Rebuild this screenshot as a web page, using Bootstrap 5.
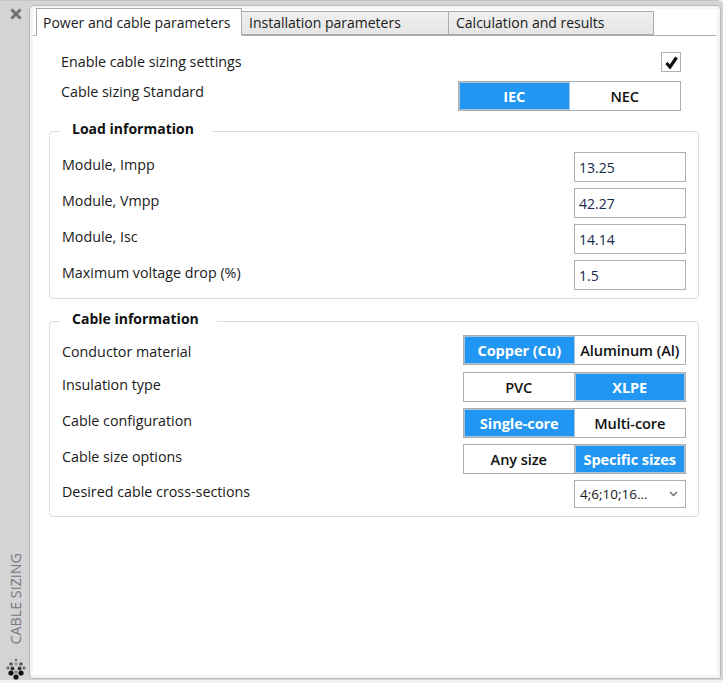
<!DOCTYPE html>
<html lang="en">
<head>
  <meta charset="UTF-8">
  <meta name="viewport" content="width=device-width, initial-scale=1.0">
  <title>Cable sizing</title>
  <link href="https://cdn.jsdelivr.net/npm/bootstrap@5.3.0/dist/css/bootstrap.min.css" rel="stylesheet">
  <style>
    html, body { height: 100%; }
    body { background: #f0f0f0; font-family: "Open Sans", "Noto Sans", sans-serif; font-size: 14.3px; color: #1a1a1a; overflow: hidden; }
    .palette { height: 680px; width: 723px; background: #d4d4d4; padding: 4px 2px 1px 0; border-top: 1px solid #c4c4c4; border-top-right-radius: 6px; }
    .side-strip { width: 29px; flex: none; }
    .close-x { width: 12px; height: 12px; margin-top: 3px; margin-left: 2px; display: block; }
    .side-title { writing-mode: vertical-rl; transform: rotate(180deg); font-size: 14.3px; color: #77777f; line-height: 1; margin-bottom: 13px; margin-left: 3px; }
    .side-logo { width: 22px; height: 22px; margin-bottom: -1px; margin-left: 3px; display: block; }
    .main-pane { background: #fff; border: 1px solid #b9b9b9; border-radius: 4px 4px 3px 4px; box-shadow: inset 0 0 0 3px #f4f4f4; padding: 2px 4px 0 3px; min-width: 0; }
    .tab-row { height: 28px; padding-left: 3px; border-bottom: 1px solid #a9a9a9; }
    .tab-item { width: 206px; height: 24px; margin-top: 3px; border: 1px solid #acacac; border-left-width: 0; background: linear-gradient(#f0f0f0, #e5e5e5); font-size: 14px; line-height: 22px; padding-left: 7px; color: #1a1a1a; white-space: nowrap; }
    .tab-item.is-active { height: 28px; margin-top: 0; background: #fff; border-left-width: 1px; border-bottom-color: #fff; padding-left: 6px; line-height: 27px; margin-bottom: -1px; }
    .tab-item:nth-child(2) { width: 207px; }
    .tab-item:nth-child(3) { width: 205px; }
    .tab-body { padding: 0 17px 0 16px; }
    .top-row { height: 30px; padding: 0 18px 0 12px; }
    .enable-row { margin-top: 11px; margin-bottom: 4px; }
    .tick-box { width: 20px; height: 20px; border: 1px solid #b0b0b0; background: #fff; }
    .seg-wrap { display: flex; border: 1px solid #adadad; height: 30px; width: 223px; flex: none; }
    .seg-btn { flex: 1 1 50%; text-align: center; font-size: 14.6px; font-weight: 600; line-height: 28px; color: #111; background: #fff; white-space: nowrap; letter-spacing: -0.1px; }
    .seg-btn:first-child { border-right: 1px solid #adadad; }
    .seg-btn.is-on { background: #2196f3; color: #fff; font-weight: 700; border: 1px solid #a9c3d8; line-height: 26px; }
    .group-box { border: 1px solid #d8dde2; border-radius: 4px; padding: 0 12px; margin: 0; min-width: 0; }
    .group-box legend { float: none; width: auto; margin: 0 0 0 -2px; padding: 1px 18px 5px 12px; font-size: 14px; font-weight: 700; line-height: 20px; color: #111; }
    .load-box { margin-top: 7px; height: 181px; }
    .cable-box { margin-top: 9px; height: 209px; }
    .load-rows { margin-top: 8px; }
    .cable-rows { margin-top: 1px; }
    .field-row { height: 30px; margin-bottom: 6px; }
    .cable-rows .field-row:first-child { margin-bottom: 7px; }
    .field-label { margin-top: -4px; }
    .field-label-low { margin-top: 4px; }
    .num-box { width: 112px; height: 30px; border: 1px solid #b0b0b0; padding: 1px 5px 0 4px; line-height: 28px; color: #14284a; font-size: 14px; background: #fff; }
    .select-box { width: 112px; height: 28px; border: 1px solid #b0b0b0; padding: 0 7px 0 5px; background: #fff; color: #1a1a1a; font-size: 13.5px; }
  </style>
</head>
<body>
  <div class="palette d-flex">
    <div class="side-strip d-flex flex-column align-items-center justify-content-between">
      <svg class="close-x" viewBox="0 0 12 12"><path d="M1.5 1.5 L10.5 10.5 M10.5 1.5 L1.5 10.5" fill="none" stroke="#707070" stroke-width="3"/></svg>
      <div class="d-flex flex-column align-items-center">
        <div class="side-title">CABLE SIZING</div>
        <svg class="side-logo" viewBox="5 658 22 22">
          <circle cx="16" cy="660" r="1.2" fill="#666"/>
          <circle cx="11" cy="664" r="1.8" fill="#555"/><circle cx="16" cy="664" r="1.8" fill="#999"/><circle cx="21" cy="664" r="1.8" fill="#555"/>
          <circle cx="8" cy="668" r="1.7" fill="#777"/><circle cx="12.5" cy="668.5" r="2" fill="#333"/><circle cx="19.5" cy="668.5" r="2" fill="#333"/><circle cx="24" cy="668" r="1.7" fill="#777"/>
          <circle cx="16" cy="672" r="1.8" fill="#888"/>
          <circle cx="11" cy="673" r="2.6" fill="#111"/><circle cx="21" cy="673" r="2.6" fill="#111"/>
          <circle cx="16" cy="677" r="2.6" fill="#111"/>
        </svg>
      </div>
    </div>

    <div class="main-pane flex-grow-1 d-flex flex-column">
      <div class="tab-row d-flex">
        <div class="tab-item is-active">Power and cable parameters</div>
        <div class="tab-item">Installation parameters</div>
        <div class="tab-item">Calculation and results</div>
      </div>

      <div class="tab-body">
        <div class="d-flex justify-content-between align-items-center top-row enable-row">
          <span>Enable cable sizing settings</span>
          <span class="tick-box d-flex align-items-center justify-content-center">
            <svg width="13" height="13" viewBox="0 0 13 13"><path d="M1.5 7 L5 11 L11.5 1.5" fill="none" stroke="#111" stroke-width="3.2"/></svg>
          </span>
        </div>
        <div class="d-flex justify-content-between top-row">
          <span>Cable sizing Standard</span>
          <div class="seg-wrap">
            <div class="seg-btn is-on">IEC</div>
            <div class="seg-btn">NEC</div>
          </div>
        </div>

        <fieldset class="group-box load-box">
          <legend>Load information</legend>
          <div class="load-rows">
            <div class="field-row d-flex justify-content-between align-items-center">
              <span class="field-label">Module, Impp</span><div class="num-box">13.25</div>
            </div>
            <div class="field-row d-flex justify-content-between align-items-center">
              <span class="field-label">Module, Vmpp</span><div class="num-box">42.27</div>
            </div>
            <div class="field-row d-flex justify-content-between align-items-center">
              <span class="field-label">Module, Isc</span><div class="num-box">14.14</div>
            </div>
            <div class="field-row d-flex justify-content-between align-items-center">
              <span class="field-label">Maximum voltage drop (%)</span><div class="num-box">1.5</div>
            </div>
          </div>
        </fieldset>

        <fieldset class="group-box cable-box">
          <legend>Cable information</legend>
          <div class="cable-rows">
            <div class="field-row d-flex justify-content-between align-items-center">
              <span class="field-label-low">Conductor material</span>
              <div class="seg-wrap"><div class="seg-btn is-on">Copper (Cu)</div><div class="seg-btn">Aluminum (Al)</div></div>
            </div>
            <div class="field-row d-flex justify-content-between align-items-center">
              <span class="field-label">Insulation type</span>
              <div class="seg-wrap"><div class="seg-btn">PVC</div><div class="seg-btn is-on">XLPE</div></div>
            </div>
            <div class="field-row d-flex justify-content-between align-items-center">
              <span class="field-label">Cable configuration</span>
              <div class="seg-wrap"><div class="seg-btn is-on">Single-core</div><div class="seg-btn">Multi-core</div></div>
            </div>
            <div class="field-row d-flex justify-content-between align-items-center">
              <span class="field-label">Cable size options</span>
              <div class="seg-wrap"><div class="seg-btn">Any size</div><div class="seg-btn is-on">Specific sizes</div></div>
            </div>
            <div class="d-flex justify-content-between align-items-center">
              <span class="field-label">Desired cable cross-sections</span>
              <div class="select-box d-flex justify-content-between align-items-center">
                <span>4;6;10;16...</span>
                <svg width="9" height="6" viewBox="0 0 9 6"><path d="M1 1 L4.5 4.5 L8 1" fill="none" stroke="#666" stroke-width="1.3"/></svg>
              </div>
            </div>
          </div>
        </fieldset>
      </div>
    </div>
  </div>
  <script src="https://cdn.jsdelivr.net/npm/bootstrap@5.3.0/dist/js/bootstrap.bundle.min.js"></script>
</body>
</html>
